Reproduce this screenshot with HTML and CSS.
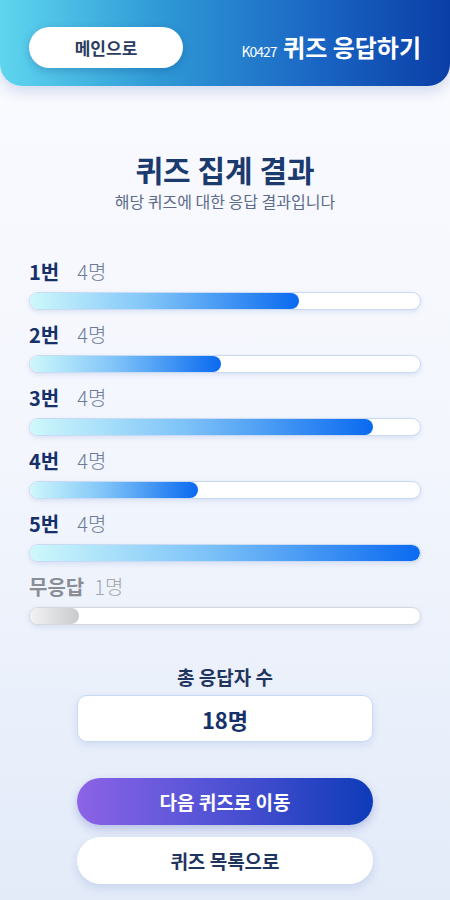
FILE: index.html
```html
<!DOCTYPE html>
<html>
  <head>
    <meta charset="utf-8">
    <link rel="stylesheet" href="styles.css">
  </head>
  <body>
    <div class="header">
      <button class="homeBtn">메인으로</button>
      <p class="header-title"><span class="code">K0427</span> 퀴즈 응답하기</p>
    </div>

    <div class="result">
      <h1 class="result-title">퀴즈 집계 결과</h1>
      <p class="result-sub">해당 퀴즈에 대한 응답 결과입니다</p>

      <div class="rows">
        <div class="row">
          <p class="row-label">1번<span class="count">4명</span></p>
          <div class="track"><div class="fill" style="width: 69%"></div></div>
        </div>
        <div class="row">
          <p class="row-label">2번<span class="count">4명</span></p>
          <div class="track"><div class="fill" style="width: 49%"></div></div>
        </div>
        <div class="row">
          <p class="row-label">3번<span class="count">4명</span></p>
          <div class="track"><div class="fill" style="width: 88%"></div></div>
        </div>
        <div class="row">
          <p class="row-label">4번<span class="count">4명</span></p>
          <div class="track"><div class="fill" style="width: 43%"></div></div>
        </div>
        <div class="row">
          <p class="row-label">5번<span class="count">4명</span></p>
          <div class="track"><div class="fill" style="width: 100%"></div></div>
        </div>
        <div class="row none">
          <p class="row-label">무응답<span class="count">1명</span></p>
          <div class="track"><div class="fill" style="width: 12.5%"></div></div>
        </div>
      </div>

      <div class="total">
        <p class="total-label">총 응답자 수</p>
        <div class="total-box">18명</div>
      </div>

      <div class="actions">
        <button class="nextBtn">다음 퀴즈로 이동</button>
        <button class="listBtn">퀴즈 목록으로</button>
      </div>
    </div>
  </body>
</html>
```

FILE: styles.css
```css
* {
  margin: 0;
  padding: 0;
  box-sizing: border-box;
}
body {
  width: 450px;
  min-height: 900px;
  background: linear-gradient(180deg, #fbfbff 0%, #f3f6fd 50%, #e3ebf9 100%);
  font-family: "Noto Sans CJK KR", "Noto Sans", sans-serif;
  color: #1b3a6e;
}
button {
  font-family: inherit;
  border: none;
  cursor: pointer;
}
.header {
  height: 86px;
  padding: 8px 29px 0 29px;
  display: flex;
  align-items: center;
  justify-content: space-between;
  background: linear-gradient(90deg, #5fd6ef 0%, #2f9ad6 35%, #1a66c4 70%, #0a3ea6 100%);
  border-radius: 0 0 22px 22px;
  box-shadow: 0 6px 14px rgba(40, 80, 160, 0.18);
}
.homeBtn {
  width: 154px;
  height: 41px;
  border-radius: 21px;
  background: white;
  color: #2c3c60;
  font-size: 17px;
  font-weight: bold;
  box-shadow: 0 3px 8px rgba(10, 50, 120, 0.25);
}
.header-title {
  color: white;
  font-size: 24px;
  font-weight: bold;
  margin-top: -2px;
}
.header-title .code {
  font-size: 14px;
  font-weight: normal;
  letter-spacing: -1px;
  margin-right: 1px;
}
.result {
  padding: 0 29px;
}
.result-title {
  margin-top: 62px;
  text-align: center;
  font-size: 30px;
  line-height: 42px;
  font-weight: bold;
  color: #1b3a6e;
}
.result-sub {
  text-align: center;
  font-size: 16px;
  line-height: 22px;
  color: #5b6b88;
}
.rows {
  margin-top: 47px;
  display: flex;
  flex-direction: column;
  gap: 12px;
}
.row-label {
  font-size: 20px;
  line-height: 26px;
  font-weight: bold;
  color: #16306a;
}
.row-label .count {
  margin-left: 18px;
  font-weight: 300;
  color: #6d7b98;
}
.track {
  margin-top: 7px;
  height: 18px;
  border-radius: 9px;
  background: white;
  border: 1px solid #c9daf5;
  box-shadow: 0 2px 5px rgba(70, 110, 190, 0.15);
  overflow: hidden;
}
.fill {
  height: 100%;
  border-radius: 9px;
  background: linear-gradient(90deg, #cef8fb 0%, #7ec3f8 45%, #0a6af0 100%);
}
.none .row-label {
  color: #8a8d94;
}
.none .row-label .count {
  color: #a4a7ad;
  margin-left: 10px;
}
.none .track {
  border-color: #d6d8dc;
}
.none .fill {
  background: linear-gradient(90deg, #f2f2f3 0%, #c9cacc 100%);
}
.total {
  margin-top: 40px;
  display: flex;
  flex-direction: column;
  align-items: center;
}
.total-label {
  font-size: 19px;
  line-height: 24px;
  font-weight: bold;
  color: #1f3560;
}
.total-box {
  margin-top: 6px;
  width: 296px;
  height: 47px;
  border-radius: 10px;
  background: white;
  border: 1px solid #c9daf5;
  box-shadow: 0 3px 8px rgba(70, 110, 190, 0.15);
  display: flex;
  align-items: center;
  justify-content: center;
  font-size: 22px;
  font-weight: bold;
  color: #16306a;
}
.actions {
  margin-top: 36px;
  display: flex;
  flex-direction: column;
  align-items: center;
  gap: 12px;
}
.nextBtn,
.listBtn {
  width: 296px;
  height: 47px;
  border-radius: 24px;
  font-size: 19px;
  font-weight: bold;
}
.nextBtn {
  background: linear-gradient(90deg, #8c63e6 0%, #5a55d8 40%, #0e3bb8 100%);
  color: white;
  box-shadow: 0 4px 10px rgba(40, 60, 170, 0.25);
}
.listBtn {
  background: white;
  color: #1f3560;
  box-shadow: 0 4px 10px rgba(70, 110, 190, 0.18);
}
```
